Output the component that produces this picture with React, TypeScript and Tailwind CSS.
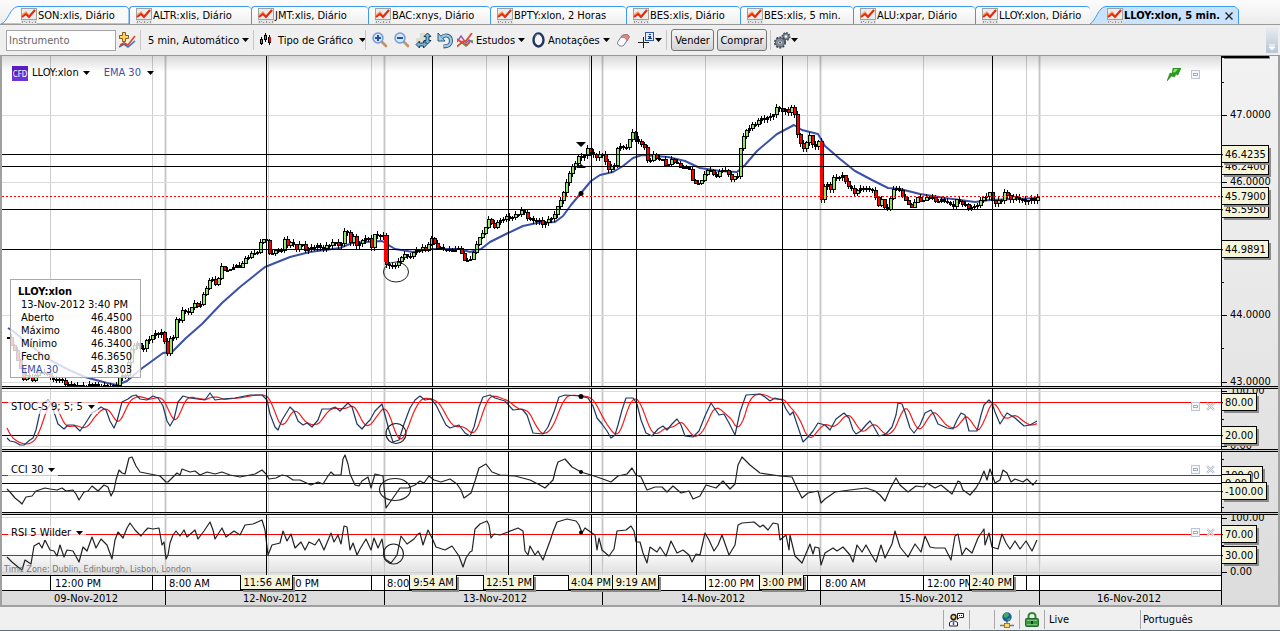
import type { ReactNode } from "react";
import clsx from "clsx";

type Point = [number, number];

const PLOT_LEFT = 2;
const AXIS_LEFT = 1221;

const TABS = [
  { label: "SON:xlis, Diário", width: "w-[129px] pl-[21px]" },
  { label: "ALTR:xlis, Diário", width: "w-[122px] pl-[6px]" },
  { label: "JMT:xlis, Diário", width: "w-[117px] pl-[6px]" },
  { label: "BAC:xnys, Diário", width: "w-[122px] pl-[6px]" },
  { label: "BPTY:xlon, 2 Horas", width: "w-[136px] pl-[6px]" },
  { label: "BES:xlis, Diário", width: "w-[114px] pl-[6px]" },
  { label: "BES:xlis, 5 min.", width: "w-[113px] pl-[6px]" },
  { label: "ALU:xpar, Diário", width: "w-[122px] pl-[6px]" },
  { label: "LLOY:xlon, Diário", width: "w-[115px] pl-[6px]" },
];

const PRICE =
  "8,337 13,350 19,363 23,380 27,373 31,383 35,373 40,372 50,375 57,382 60,377 63,383 75,386 93,385 107,387 115,385 118,378 125,375 128,363 132,343 137,345 142,350 147,338 153,335 160,332 163,333 166,353 168,352 170,340 173,337 175,318 179,320 181,307 187,315 193,302 199,307 204,293 210,277 215,283 218,280 221,267 227,270 233,267 240,266 245,258 257,251 260,242 264,237 267,242 269,255 273,250 282,250 284,241 287,245 290,240 297,250 300,243 305,248 313,247 327,246 333,243 343,243 344,231 348,232 350,243 353,235 357,247 362,240 368,238 372,247 374,235 383,236 385,262 392,267 400,260 403,251 408,259 413,252 422,247 425,252 430,237 435,243 438,249 460,250 464,260 472,257 478,238 483,232 487,219 493,227 500,219 510,217 522,211 528,218 543,223 550,218 555,215 558,202 563,192 567,178 572,168 578,155 582,158 587,150 590,152 594,152 597,160 600,150 604,160 608,167 615,165 617,148 627,145 632,132 636,142 643,142 645,153 648,165 652,155 660,158 667,167 672,157 680,168 690,167 693,186 700,182 707,168 715,177 723,167 730,179 737,175 740,147 745,132 753,123 765,118 772,115 777,107 782,110 787,108 790,115 792,102 795,122 798,138 802,149 810,135 813,147 819,140 821,198 825,184 830,187 833,177 843,177 848,185 855,193 862,187 872,190 877,205 882,197 885,213 888,207 894,185 897,187 900,193 909,207 917,198 922,203 927,195 937,202 943,198 952,207 957,198 967,208 973,207 978,202 985,197 990,192 993,202 1000,202 1004,192 1010,197 1020,199 1033,200 1037,197";

const EMA =
  "8,328 13,331 27,343 50,360 67,369 85,377 107,383 117,385 127,381 141,369 163,353 172,352 178,346 186,338 202,324 222,303 240,287 265,267 290,257 310,252 340,248 352,243 365,242 382,241 395,249 413,252 430,249 460,249 470,252 481,249 490,242 508,233 523,226 537,223 555,222 563,216 571,205 581,193 591,181 600,175 613,172 623,166 633,158 642,155 668,157 685,161 700,168 720,171 737,172 745,165 757,151 777,134 794,125 802,130 818,134 825,146 840,159 855,171 872,180 888,188 900,189 920,194 945,198 975,202 990,200 1037,198";

// starts before the visible range so the slow line has something to average
const STOCHASTIC =
  "-8,405 -2,418 3,432 7,438 10,441 15,442 20,445 24,445 30,440 33,438 36,430 40,412 44,403 48,400 51,403 54,412 58,424 64,429 68,425 74,425 80,431 85,424 92,413 97,410 101,407 106,410 110,421 114,428 117,421 122,402 128,399 132,396 136,395 140,399 147,400 153,396 158,398 163,406 167,421 170,426 174,419 178,402 183,396 190,398 197,399 205,400 210,393 215,400 222,399 235,398 250,395 262,395 267,400 270,414 275,427 278,430 282,420 290,407 294,411 298,421 303,425 307,423 312,427 318,420 322,409 330,409 335,407 340,411 348,403 352,407 357,424 362,429 367,423 370,420 375,411 382,404 385,415 389,430 393,442 399,440 404,424 410,408 415,400 420,396 425,400 431,399 436,405 441,415 446,425 450,428 459,425 465,433 470,436 474,427 479,407 483,397 490,395 495,398 505,401 513,410 522,409 527,415 533,433 543,434 548,427 554,412 559,397 565,395 580,396 588,398 593,406 597,418 602,424 607,431 611,438 615,435 618,425 622,410 626,398 633,398 637,404 641,420 646,433 652,436 658,429 663,426 667,430 672,424 677,419 681,425 685,436 693,437 699,431 705,416 711,403 719,415 724,414 729,423 735,435 740,412 746,395 760,394 765,397 770,401 775,398 782,400 786,409 790,415 793,412 798,427 803,442 808,437 813,431 818,423 825,425 830,430 836,419 844,413 849,418 853,430 856,434 861,431 866,425 870,421 874,427 879,436 886,434 892,427 896,415 898,403 902,404 905,412 910,428 914,433 920,425 925,413 931,410 934,415 938,424 947,428 953,429 957,420 961,413 965,415 969,431 977,431 981,415 984,405 989,400 992,403 995,412 1000,424 1007,413 1015,418 1024,426 1030,425 1037,421";

const CCI =
  "7,489 10,492 15,498 20,502 22,504 26,497 32,496 36,491 45,488 50,489 57,490 62,488 66,491 73,490 76,494 79,500 84,492 88,491 92,486 98,491 104,485 108,487 111,496 114,490 116,480 119,470 122,473 125,474 127,466 129,458 132,457 136,466 140,472 150,474 160,476 166,482 168,482 173,477 177,473 180,475 182,469 190,472 195,471 200,475 207,472 215,474 222,472 230,475 240,477 255,474 262,470 266,474 269,479 276,478 282,475 287,476 293,480 300,480 311,485 318,482 323,484 328,476 331,472 334,475 341,475 343,459 345,455 348,464 350,474 355,485 359,486 362,481 368,477 371,488 375,474 383,476 386,508 393,498 400,488 408,488 415,485 420,481 424,483 429,476 434,480 441,482 450,479 457,484 461,490 464,498 471,493 475,481 479,468 486,464 492,472 500,475 515,476 530,480 538,484 545,488 553,480 556,468 558,462 565,459 572,467 581,472 591,475 600,478 611,482 618,476 627,474 632,468 636,475 641,477 647,490 655,487 662,487 667,492 673,486 681,493 689,491 693,499 700,496 706,485 716,488 723,481 730,489 735,484 738,465 742,457 750,465 760,473 780,476 792,477 798,490 802,498 808,493 818,491 821,503 825,499 835,492 850,490 866,488 875,491 880,495 885,501 890,489 896,478 900,485 908,492 916,486 924,487 927,483 935,488 941,485 952,494 958,481 960,482 963,490 970,495 976,488 980,481 984,471 987,480 990,469 995,483 1000,480 1003,470 1007,473 1011,482 1015,479 1023,482 1027,479 1033,485 1037,480";

const RSI =
  "7,557 12,562 18,567 22,570 25,560 31,564 34,546 39,543 42,548 45,540 50,550 54,551 57,556 60,545 64,557 67,550 73,551 79,562 83,547 87,551 92,537 96,548 101,539 107,545 112,559 115,540 118,532 123,538 127,528 130,523 135,530 141,536 145,531 148,528 153,529 159,528 162,545 164,542 166,559 168,555 170,543 173,535 176,531 180,536 184,530 187,537 195,530 198,539 204,531 210,522 213,530 215,539 222,528 226,537 234,531 240,535 245,525 253,524 262,520 265,530 268,555 272,545 280,543 283,531 287,541 291,534 295,548 301,542 305,550 309,542 315,545 319,539 324,550 331,533 334,542 338,535 341,544 344,526 347,527 350,550 353,543 357,555 360,549 366,539 371,550 374,538 378,548 382,539 385,559 391,563 397,555 401,536 407,544 414,539 418,534 420,533 423,545 428,530 432,538 436,547 445,550 452,546 459,556 463,567 466,558 470,552 472,551 475,529 480,524 487,521 489,525 491,538 494,534 500,535 508,532 518,528 523,531 525,551 528,555 530,546 535,555 538,551 543,560 550,541 553,532 557,522 567,519 576,521 579,525 582,533 585,528 592,533 595,535 597,550 599,538 602,550 609,556 614,549 617,531 626,530 631,526 634,531 636,542 640,542 643,553 647,563 650,547 657,552 660,547 666,556 671,541 677,553 683,550 689,555 692,562 696,554 700,555 705,533 709,540 714,551 718,545 722,535 729,555 735,545 738,525 742,523 754,522 760,527 763,525 768,530 773,523 778,524 780,540 786,535 789,550 790,535 795,556 802,563 810,544 813,554 815,547 819,548 821,565 825,553 833,548 837,551 843,547 850,555 853,562 857,545 862,552 866,545 871,554 876,562 881,545 885,558 892,544 895,531 900,547 908,557 915,544 921,552 925,536 930,547 935,548 945,548 951,560 955,536 958,534 962,555 966,548 972,553 978,538 984,529 985,545 989,533 992,547 998,549 1002,534 1006,543 1010,549 1015,541 1020,549 1026,541 1032,551 1037,540";

const HOUR_LINES = [50, 152, 268, 371, 486, 589, 705, 807, 923, 1026];
const DAY_LINES = [165, 384, 602, 820, 1039];
const MARKS = [266, 432, 508, 591, 636, 782, 992];

const TIME_LABELS = [
  { x: 55, text: "12:00 PM" },
  { x: 169, text: "8:00 AM" },
  { x: 273, text: "12:00 PM" },
  { x: 387, text: "8:00 AM" },
  { x: 708, text: "12:00 PM" },
  { x: 825, text: "8:00 AM" },
  { x: 927, text: "12:00 PM" },
];

const TIME_TAGS = [
  { x: 241, w: 52, text: "11:56 AM" },
  { x: 410, w: 47, text: "9:54 AM" },
  { x: 484, w: 50, text: "12:51 PM" },
  { x: 569, w: 44, text: "4:04 PM" },
  { x: 613, w: 46, text: "9:19 AM" },
  { x: 760, w: 44, text: "3:00 PM" },
  { x: 970, w: 44, text: "2:40 PM" },
];

const DATES = [
  { x: 86, text: "09-Nov-2012" },
  { x: 275, text: "12-Nov-2012" },
  { x: 495, text: "13-Nov-2012" },
  { x: 713, text: "14-Nov-2012" },
  { x: 931, text: "15-Nov-2012" },
  { x: 1129, text: "16-Nov-2012" },
];

const QUOTE = [
  ["Aberto", "46.4500"],
  ["Máximo", "46.4800"],
  ["Mínimo", "46.3400"],
  ["Fecho", "46.3650"],
];

function parse(series: string): Point[] {
  return series.split(" ").map((p) => p.split(",").map(Number) as Point);
}

function valueAt(points: Point[], x: number): number {
  const i = points.findIndex((p) => p[0] >= x);
  if (i < 0) return points[points.length - 1][1];
  if (i === 0) return points[0][1];
  const [x0, y0] = points[i - 1];
  const [x1, y1] = points[i];
  return y0 + ((y1 - y0) * (x - x0)) / (x1 - x0);
}

function buildCandles() {
  const points = parse(PRICE);
  const candles = [];
  let open = points[0][1];
  for (let i = 0; i < 344; i++) {
    const x = 8 + i * 3;
    const noise = Math.sin(i * 2.3) * 1.2 + Math.sin(i * 5.1) * 0.9;
    const close = Math.round(valueAt(points, x) + noise);
    const top = Math.min(open, close);
    const bottom = Math.max(open, close);
    candles.push({
      x: x - 1,
      top,
      height: Math.max(bottom - top, 1) + 1,
      high: top - Math.round(Math.abs(Math.sin(i * 1.7)) * 3),
      low: bottom + 1 + Math.round(Math.abs(Math.sin(i * 3.1)) * 3),
      up: close < open,
    });
    open = close;
  }
  return candles;
}

function buildSlowLine() {
  const points = parse(STOCHASTIC);
  const out: string[] = [];
  for (let x = 7; x <= 1037; x += 2) {
    let sum = 0;
    for (let k = 0; k < 6; k++) sum += valueAt(points, x - k * 2);
    out.push(`${x},${(sum / 6).toFixed(1)}`);
  }
  return out.join(" ");
}

const CANDLES = buildCandles();
const FAST_LINE = parse(STOCHASTIC)
  .filter(([x]) => x >= 7)
  .map((p) => p.join(","))
  .join(" ");
const SLOW_LINE = buildSlowLine();

function Caret() {
  return (
    <svg width="7" height="4" viewBox="0 0 7 4" className="shrink-0">
      <path d="M0 0h7L3.5 4z" fill="#000" />
    </svg>
  );
}

function ChartIcon() {
  return (
    <svg width="16" height="16" viewBox="0 0 16 16" className="shrink-0">
      <rect x=".5" y=".5" width="15" height="11" fill="#e9edef" stroke="#a0a0a0" />
      <path d="M0 12h16v4H0z" fill="#e4e4e4" />
      <path d="M1.500 13v2M3.500 13v1M5.500 14v1M8.500 13v2M11.500 14v1M14.500 13v2" stroke="#999" />
      <path d="M1 7l4-3 3 4 6-6" fill="none" stroke="#ff9a5d" strokeWidth="1.5" />
      <path d="M1 9l4-3 3 3 6-7" fill="none" stroke="#e02a0c" strokeWidth="2" />
    </svg>
  );
}

function AddInstrumentIcon() {
  return (
    <svg width="17" height="17" viewBox="0 0 17 17">
      <path d="M0 15l5-3 4 3 7-6" fill="none" stroke="#3f6fae" strokeWidth="1.6" />
      <path d="M1 13l4-2 4 2 7-9" fill="none" stroke="#e0402a" strokeWidth="1.6" />
      <path d="M3.500.5h3v3h3v3h-3v3h-3v-3h-3v-3h3z" fill="#ffd45a" stroke="#8a5a12" />
    </svg>
  );
}

function CandlesIcon() {
  return (
    <svg width="12" height="14" viewBox="0 0 12 14" shapeRendering="crispEdges" className="shrink-0">
      <path d="M1 4h1v8H1zM5 0h1v9H5zM9 2h1v10H9z" fill="#000" />
      <path d="M0 6h3v5H0zM4 2h3v5H4zM8 4h3v6H8z" fill="#000" />
      <path d="M1 7h1v3H1zM5 3h1v3H5z" fill="#00d800" />
      <path d="M9 4h2v5H9z" fill="#f00" />
    </svg>
  );
}

function ZoomIcon({ plus }: { plus?: boolean }) {
  return (
    <svg width="16" height="16" viewBox="0 0 16 16">
      <path d="M10 10l4 4" stroke="#c9935f" strokeWidth="2.6" strokeLinecap="round" />
      <circle cx="6" cy="6" r="5" fill="#d5e8fa" stroke="#6f98d4" strokeWidth="1.4" />
      <path d={plus ? "M3 6h6M6 3v6" : "M3 6h6"} stroke="#2450a4" strokeWidth="2" />
    </svg>
  );
}

function FitIcon() {
  return (
    <svg width="17" height="17" viewBox="0 0 17 17">
      <path d="M5 1h5v9H1V6h4z" fill="#dcdccf" />
      <path
        d="M12.500 1l3.500 3.500h-2v4h2L12.500 12 9 8.500h2v-4H9zM1 12.500L4.500 9v2h4V9l3.500 3.500L8.500 16v-2h-4v2z"
        fill="#7db4d4"
        stroke="#163c5c"
      />
    </svg>
  );
}

function UndoIcon() {
  return (
    <svg width="17" height="17" viewBox="0 0 17 17">
      <path d="M4.500 5.500C8 2 14 3 14 9c0 3.500-3 5.500-7.500 5.500" fill="none" stroke="#245a80" strokeWidth="4" />
      <path d="M1 1v8h7z" fill="#a5cbe2" stroke="#245a80" />
      <path d="M4.500 5.500C8 2 14 3 14 9c0 3.500-3 5.500-7 5" fill="none" stroke="#9cc8e2" strokeWidth="2.2" />
    </svg>
  );
}

function StudiesIcon() {
  return (
    <svg width="16" height="15" viewBox="0 0 16 15" fill="none" strokeWidth="1.4" className="shrink-0">
      <path d="M0 13l5-3 4 3 4-5h3" stroke="#3aa048" />
      <path d="M0 9l4-6 5 7 3-3 4 3" stroke="#8a5ab4" />
      <path d="M0 6l4 3 5-1 6-8" stroke="#e8452c" strokeWidth="1.8" />
      <path d="M0 14l5-5 5 3 3-3" stroke="#e8452c" />
    </svg>
  );
}

function EllipseIcon() {
  return (
    <svg width="13" height="16" viewBox="0 0 13 16" className="shrink-0">
      <ellipse cx="6.500" cy="8" rx="5" ry="6.500" fill="#f4f6fa" stroke="#22355c" strokeWidth="2.4" />
      <path d="M3 4.500c1-2 3-2.500 4.500-2" stroke="#8ba4d0" fill="none" />
    </svg>
  );
}

function EraserIcon() {
  return (
    <svg width="13" height="13" viewBox="0 0 13 13">
      <path d="M5 1.500l4-1c2 0 3.500 1.500 3 3L7 11c-1 1.500-4 1.500-5.500 0S.5 8.500 1 7.500z" fill="#fafafa" stroke="#6f7d98" />
      <path d="M5 1.500l4-1c2 0 3.500 1.500 3 3L10 7C9 4 7 3 4 3.500z" fill="#dd8a84" stroke="#b05c58" strokeWidth=".6" />
    </svg>
  );
}

function CrosshairIcon() {
  return (
    <svg width="16" height="16" viewBox="0 0 16 16" shapeRendering="crispEdges" className="shrink-0">
      <path d="M0 10h11v1H0zM5 5h1v11H5z" fill="#222" />
      <rect x="7.500" y=".5" width="8" height="8" fill="#dcecff" stroke="#2c5a9c" />
      <path d="M11 2h2v1h-2zM10 4h3v2h1v1h-4V6h1V5h-1z" fill="#1c3f88" />
    </svg>
  );
}

function GearsIcon() {
  return (
    <svg width="17" height="17" viewBox="0 0 17 17" className="shrink-0">
      <circle cx="12" cy="4.500" r="3.500" fill="none" stroke="#4a525c" strokeWidth="2" strokeDasharray="1.6 1.1" />
      <circle cx="12" cy="4.500" r="3" fill="#8f99a4" stroke="#4a525c" />
      <circle cx="12" cy="4.500" r="1.200" fill="#eee" />
      <circle cx="6" cy="10.500" r="5" fill="none" stroke="#3d4650" strokeWidth="2" strokeDasharray="2 1.2" />
      <circle cx="6" cy="10.500" r="4.500" fill="#8b96a2" stroke="#4a5460" />
      <circle cx="6" cy="10.500" r="2.500" fill="#c8d0d8" stroke="#5a6470" strokeWidth=".8" />
      <circle cx="6" cy="10.500" r="1" fill="#3d4650" />
    </svg>
  );
}

function WindowIcon() {
  return (
    <svg width="9" height="9" viewBox="0 0 9 9" shapeRendering="crispEdges">
      <rect x=".5" y=".5" width="8" height="8" fill="#f4f6f9" stroke="#bcc5d2" />
      <rect x="2.500" y="3.500" width="4" height="2" fill="#fff" stroke="#a4b0c2" />
    </svg>
  );
}

function CloseIcon() {
  return (
    <svg width="9" height="9" viewBox="0 0 9 9">
      <path d="M1 1l7 7M8 1L1 8" stroke="#b4bcc6" strokeWidth="2.4" />
      <path d="M1 1l7 7M8 1L1 8" stroke="#eef1f4" />
    </svg>
  );
}

function Separator() {
  return <div className="h-5 w-px shrink-0 bg-[#c6c6c6]" />;
}

function TabBar() {
  return (
    <div role="tablist" className="flex h-6 items-end overflow-hidden bg-linear-to-b from-[#fcfcfc] to-[#ececec]">
      {TABS.map((tab, i) => (
        <button
          key={tab.label}
          role="tab"
          className={clsx(
            "relative flex h-[18px] shrink-0 items-end whitespace-nowrap",
            tab.width,
            i > 0 && "rounded-t-sm border-t border-l border-[#3d9bf0] bg-linear-to-b from-white to-[#efefef]",
          )}
        >
          {i === 0 && (
            <svg width="129" height="18" viewBox="0 0 129 18" className="absolute top-0 left-0">
              <path d="M1 18C8 16 10 1 18 .5H126L129 3V18z" fill="#f9f9f9" stroke="#3d9bf0" />
            </svg>
          )}
          <span className="relative flex items-center gap-px">
            <ChartIcon />
            {tab.label}
          </span>
        </button>
      ))}
      <button
        role="tab"
        aria-selected="true"
        className="relative flex h-[18px] w-[149px] shrink-0 items-end whitespace-nowrap pl-[17px] font-bold"
      >
        <svg width="149" height="18" viewBox="0 0 149 18" className="absolute top-0 left-0">
          <path d="M0 18C6 15 8 1 16 .5H145L148.500 4V18" fill="#c9e3ff" stroke="#3d9bf0" />
        </svg>
        <span className="relative flex items-center gap-px">
          <ChartIcon />
          LLOY:xlon, 5 min.
          <svg width="8" height="8" viewBox="0 0 8 8" className="ml-1">
            <path d="M.5.5l7 7M7.500.5l-7 7" stroke="#222" strokeWidth="1.4" />
          </svg>
        </span>
      </button>
    </div>
  );
}

function Toolbar() {
  return (
    <div className="flex h-8 items-center border-y border-[#999] bg-[#efefef] pl-[6px] whitespace-nowrap">
      <input
        aria-label="Instrumento"
        placeholder="Instrumento"
        className="h-[21px] w-[110px] shrink-0 border border-[#a5a5a5] bg-white px-[2px] pt-px outline-none placeholder:text-[#666]"
      />
      <button aria-label="Adicionar instrumento" className="ml-[3px] w-[21px] shrink-0">
        <AddInstrumentIcon />
      </button>
      <Separator />
      <button className="ml-[7px] flex w-[105px] shrink-0 items-center justify-between pr-1">
        <span className="pt-[2px] whitespace-pre">5 min, Automático</span>
        <Caret />
      </button>
      <Separator />
      <button className="ml-[6px] flex w-[105px] shrink-0 items-center gap-[6px] pr-[5px]">
        <CandlesIcon />
        <span className="flex-1 pt-[2px] text-left">Tipo de Gráfico</span>
        <Caret />
      </button>
      <Separator />
      <button aria-label="Ampliar" className="ml-[6px] w-[22px] shrink-0">
        <ZoomIcon plus />
      </button>
      <button aria-label="Reduzir" className="w-[21px] shrink-0">
        <ZoomIcon />
      </button>
      <button aria-label="Ajustar" className="w-[22px] shrink-0">
        <FitIcon />
      </button>
      <button aria-label="Anular" className="w-5 shrink-0">
        <UndoIcon />
      </button>
      <button className="flex w-[67px] shrink-0 items-center gap-[3px]">
        <StudiesIcon />
        <span className="flex-1 pt-[2px] text-left">Estudos</span>
        <Caret />
      </button>
      <button className="ml-2 flex w-[77px] shrink-0 items-center gap-[3px]">
        <EllipseIcon />
        <span className="flex-1 pt-[2px] text-left">Anotações</span>
        <Caret />
      </button>
      <button aria-label="Apagar" className="ml-2 w-[21px] shrink-0">
        <EraserIcon />
      </button>
      <button aria-label="Cursor" className="flex w-7 shrink-0 items-center gap-px">
        <CrosshairIcon />
        <Caret />
      </button>
      <Separator />
      <button className="ml-1 h-[22px] w-[43px] shrink-0 rounded-[3px] border border-[#777] bg-linear-to-b from-[#f6f6f6] to-[#d4d4d4] pt-[2px]">
        Vender
      </button>
      <button className="mx-[3px] h-[22px] w-[50px] shrink-0 rounded-[3px] border border-[#777] bg-linear-to-b from-[#f6f6f6] to-[#d4d4d4] pt-[2px]">
        Comprar
      </button>
      <Separator />
      <button aria-label="Definições" className="ml-[3px] flex shrink-0 items-center">
        <GearsIcon />
        <Caret />
      </button>
      <div className="mr-[2px] ml-auto flex h-[26px] w-3 items-end justify-center bg-linear-to-b from-[#e9edf2] to-[#b9c6d4] pb-[2px]">
        <svg width="8" height="7" viewBox="0 0 8 7">
          <path d="M1 1h6M1 3h6L4 6z" fill="#fff" stroke="#fff" />
        </svg>
      </div>
    </div>
  );
}

function Grid({ top, bottom }: { top: number; bottom: number }) {
  return (
    <g>
      {HOUR_LINES.map((x) => (
        <rect key={x} x={x} y={top} width="1" height={bottom - top} fill="#cdcdcd" />
      ))}
      {DAY_LINES.map((x) => (
        <g key={x}>
          <rect x={x - 1} y={top} width="3" height={bottom - top} fill="#e6e6e6" />
          <rect x={x} y={top} width="1" height={bottom - top} fill="#c8c8c8" />
        </g>
      ))}
    </g>
  );
}

function Marks({ top, bottom }: { top: number; bottom: number }) {
  return (
    <g>
      {MARKS.map((x) => (
        <rect key={x} x={x} y={top} width="1" height={bottom - top} fill="#000" />
      ))}
    </g>
  );
}

function Level({ y, color }: { y: number; color: string }) {
  return <rect x={PLOT_LEFT} y={y} width="100%" height="1" fill={color} />;
}

function PriceTag({ y, text, w = 48 }: { y: number; text: string; w?: number }) {
  return (
    <g>
      <rect x={AXIS_LEFT + 3} y={y - 6} width={w - 1} height="17" fill="#8a8a8a" />
      <rect x={AXIS_LEFT + 0.5} y={y - 8.5} width={w - 1} height="17" fill="#f5f5dc" stroke="#000" />
      <path d={`M${AXIS_LEFT} ${y - 2}l2 2.5l-2 2.500z`} fill="#000" />
      <text x={AXIS_LEFT + 4} y={y + 4}>
        {text}
      </text>
    </g>
  );
}

function Tick({ y, text }: { y: number; text?: string }) {
  return (
    <g>
      <rect x={AXIS_LEFT} y={y} width={text ? 6 : 3} height="1" />
      {text && (
        <text x={AXIS_LEFT + 9} y={y + 3}>
          {text}
        </text>
      )}
    </g>
  );
}

type PaneProps = {
  top: number;
  height: string;
  plot: ReactNode;
  axis: ReactNode;
  overlay?: ReactNode;
  shade?: string;
};

function Pane({ top, height, plot, axis, overlay, shade = "bg-white" }: PaneProps) {
  return (
    <div className={clsx("flex", height)}>
      <div className={clsx("relative min-w-0 flex-1", shade)}>
        <svg width="100%" height="100%" className="block overflow-hidden">
          <g transform={`translate(${-PLOT_LEFT} ${-top})`}>{plot}</g>
        </svg>
        {overlay}
      </div>
      <svg width="57" height="100%" className="block shrink-0 overflow-hidden border-l border-black">
        <g transform={`translate(${-AXIS_LEFT - 1} ${-top})`}>{axis}</g>
      </svg>
    </div>
  );
}

function Divider() {
  return <div className="h-[3px] border-y border-black bg-[#d0d0d0]" />;
}

function StudyOverlay({ name }: { name: string }) {
  return (
    <>
      <button className="absolute top-[11px] left-[6px] flex h-[14px] items-center gap-[5px] bg-white/70 px-[3px] whitespace-nowrap">
        {name}
        <Caret />
      </button>
      <div className="absolute top-[13px] right-[6px] flex gap-[6px]">
        <button aria-label="Maximizar">
          <WindowIcon />
        </button>
        <button aria-label="Fechar">
          <CloseIcon />
        </button>
      </div>
    </>
  );
}

function PricePlot() {
  return (
    <>
      <Grid top={56} bottom={386} />
      {[115, 182, 315, 382].map((y) => (
        <Level key={y} y={y} color="#dadada" />
      ))}
      <polyline points={EMA} fill="none" stroke="#3b50a8" strokeWidth="2" strokeLinejoin="round" />
      <g shapeRendering="crispEdges">
        {CANDLES.map((c) => (
          <g key={c.x}>
            <rect x={c.x + 1} y={c.high} width="1" height={c.low - c.high} fill="#000" />
            <rect x={c.x} y={c.top} width={c.height > 3 ? 4 : 3} height={c.height} fill="#000" />
            {c.height > 3 && (
              <rect x={c.x + 1} y={c.top + 1} width="2" height={c.height - 2} fill={c.up ? "#8fe86a" : "#f00"} />
            )}
          </g>
        ))}
        <rect x="820" y="141" width="2" height="58" fill="#f00" />
        <rect x="384" y="236" width="2" height="26" fill="#f00" />
      </g>
      <Marks top={56} bottom={386} />
      {[154, 166, 209, 249].map((y) => (
        <Level key={y} y={y} color="#000" />
      ))}
      <line x1="2" x2="110%" y1="196.5" y2="196.5" stroke="#f00" strokeDasharray="2 2" />
      <ellipse cx="396" cy="272" rx="12.500" ry="10" fill="none" stroke="#222" />
      <path d="M576 142h10l-5 5zM576 168h10l-5-4z" fill="#000" />
      <circle cx="581" cy="193.500" r="2.500" />
    </>
  );
}

function PriceAxis() {
  return (
    <>
      <rect x="1224" y="56" width="46" height="3" fill="#8a8a8a" />
      <rect x="1222" y="56" width="47" height="2" />
      {[82, 148, 215, 282, 348].map((y) => (
        <Tick key={y} y={y} />
      ))}
      <Tick y={115} text="47.0000" />
      <Tick y={182} text="46.0000" />
      <Tick y={315} text="44.0000" />
      <Tick y={382} text="43.0000" />
      <PriceTag y={166} text="46.2400" />
      <PriceTag y={154} text="46.4235" />
      <PriceTag y={209} text="45.5950" />
      <PriceTag y={196} text="45.7900" />
      <PriceTag y={249} text="44.9891" />
    </>
  );
}

function QuoteBox() {
  return (
    <div className="absolute top-[223px] left-2 w-[131px] border border-[#aaa] bg-white/80 pt-[5px] pr-2 pb-px pl-[7px] leading-[13px]">
      <div className="font-bold">LLOY:xlon</div>
      <div className="pl-[3px] whitespace-nowrap">13-Nov-2012 3:40 PM</div>
      <dl className="pl-[3px]">
        {QUOTE.map(([name, value]) => (
          <div key={name} className="flex justify-between">
            <dt>{name}</dt>
            <dd>{value}</dd>
          </div>
        ))}
        <div className="flex justify-between">
          <dt className="text-[#3b50a8]">EMA 30</dt>
          <dd>45.8303</dd>
        </div>
      </dl>
    </div>
  );
}

function PriceOverlay() {
  return (
    <>
      <div className="absolute inset-x-0 top-0 h-4 bg-linear-to-b from-black/15 to-transparent" />
      <div className="absolute top-[9px] left-[10px] flex h-4 items-center">
        <svg width="16" height="15" viewBox="0 0 16 15">
          <rect width="16" height="15" fill="#5a1cc0" />
          <path d="M0 15V9l16-4v10z" fill="#6d34d6" />
          <text x="8" y="11" textAnchor="middle" fontSize="8" fill="#fff">
            CFD
          </text>
        </svg>
        <button className="ml-1 flex items-center gap-1">
          LLOY:xlon
          <Caret />
        </button>
        <button className="ml-[14px] flex items-center gap-[6px] text-[#3b50a8]">
          EMA 30
          <Caret />
        </button>
      </div>
      <div className="absolute top-3 right-[21px] flex items-center gap-[10px]">
        <svg width="14" height="13" viewBox="0 0 14 13">
          <path d="M6 0h8l-3 7-2-1-1.500 3-3-1L0 13l3-8 2 .5z" fill="#2a9a20" stroke="#1c7a14" strokeWidth=".5" />
          <path d="M7 1h4L8 4.500 6 4z" fill="#8be06a" />
        </svg>
        <button aria-label="Maximizar">
          <WindowIcon />
        </button>
      </div>
      <QuoteBox />
    </>
  );
}

function TimeAxis() {
  return (
    <div className="flex">
      <svg width="100%" height="30" className="block min-w-0 flex-1 overflow-visible">
        <g transform={`translate(${-PLOT_LEFT} -575)`}>
          <rect x={PLOT_LEFT} y="576" width="100%" height="14" fill="#fff" />
          <Level y={575} color="#000" />
          <Level y={590} color="#000" />
          {HOUR_LINES.filter((x) => x !== 268).map((x) => (
            <rect key={x} x={x} y="575" width="1" height="15" />
          ))}
          {DAY_LINES.map((x) => (
            <rect key={x} x={x} y="575" width="1" height="30" />
          ))}
          {TIME_LABELS.map((t) => (
            <text key={t.x} x={t.x} y="587">
              {t.text}
            </text>
          ))}
          {DATES.map((d) => (
            <text key={d.x} x={d.x} y="602" textAnchor="middle">
              {d.text}
            </text>
          ))}
          {TIME_TAGS.map((t) => (
            <g key={t.x}>
              <rect x={t.x + 2} y="577" width={t.w} height="15" fill="#8a8a8a" />
              <rect x={t.x - 0.5} y="574.5" width={t.w} height="15" fill="#f5f5dc" stroke="#000" />
              <text x={t.x + t.w / 2} y="586" textAnchor="middle">
                {t.text}
              </text>
            </g>
          ))}
        </g>
      </svg>
      <div className="w-[57px] shrink-0 border-l border-black" />
    </div>
  );
}

function Chart() {
  return (
    <main className="border-x-2 border-b-2 border-[#a0a0a0] bg-linear-to-b from-[#f2f2f2] to-[#dcdcdc]">
      <Pane top={56} height="h-[330px]" plot={<PricePlot />} axis={<PriceAxis />} overlay={<PriceOverlay />} />
      <Divider />
      <Pane
        top={389}
        height="h-[60px]"
        plot={
          <>
            <Grid top={389} bottom={449} />
            <Level y={391} color="#dadada" />
            <Level y={446} color="#dadada" />
            <Level y={402} color="#f00" />
            <Level y={435} color="#000" />
            <g fill="none" strokeLinejoin="round" strokeWidth="1.2">
              <polyline points={SLOW_LINE} stroke="#f21c1c" />
              <polyline points={FAST_LINE} stroke="#1c3a62" />
              <circle cx="396" cy="433.500" r="10" stroke="#222" />
            </g>
            <Marks top={389} bottom={449} />
            <circle cx="581" cy="396.500" r="2.500" />
          </>
        }
        axis={
          <>
            <Tick y={391} text="100.00" />
            <Tick y={419} />
            <Tick y={446} text="0.00" />
            <PriceTag y={402} text="80.00" w={36} />
            <PriceTag y={435} text="20.00" w={36} />
          </>
        }
        overlay={<StudyOverlay name="STOC-S 9; 5; 5" />}
      />
      <Divider />
      <Pane
        top={452}
        height="h-[60px]"
        plot={
          <>
            <Grid top={452} bottom={512} />
            <Level y={475} color="#f00" />
            <Level y={483} color="#000" />
            <Level y={491} color="#008000" />
            <g fill="none" stroke="#222" strokeLinejoin="round" strokeWidth="1.2">
              <polyline points={CCI} />
              <ellipse cx="395" cy="489.500" rx="15.500" ry="11" />
            </g>
            <Marks top={452} bottom={512} />
            <circle cx="581" cy="472" r="2" />
          </>
        }
        axis={
          <>
            <Tick y={459} />
            <Tick y={507} />
            <PriceTag y={475} text="100.00" w={42} />
            <PriceTag y={483} text="0.00" w={30} />
            <PriceTag y={491} text="-100.00" w={46} />
          </>
        }
        overlay={<StudyOverlay name="CCI 30" />}
      />
      <Divider />
      <Pane
        top={515}
        height="h-[60px]"
        shade="bg-linear-to-b from-white from-60% to-[#dedede]"
        plot={
          <>
            <Grid top={515} bottom={575} />
            <Level y={517} color="#dadada" />
            <Level y={572} color="#cfcfcf" />
            <Level y={534} color="#f00" />
            <Level y={555} color="#008000" />
            <g fill="none" stroke="#222" strokeLinejoin="round" strokeWidth="1.2">
              <polyline points={RSI} />
              <circle cx="393.500" cy="554" r="10" />
            </g>
            <Marks top={515} bottom={575} />
            <circle cx="581" cy="532.500" r="2" />
          </>
        }
        axis={
          <>
            <Tick y={518} text="100.00" />
            <Tick y={545} />
            <Tick y={572} text="0.00" />
            <PriceTag y={534} text="70.00" w={36} />
            <PriceTag y={555} text="30.00" w={36} />
          </>
        }
        overlay={
          <>
            <StudyOverlay name="RSI 5 Wilder" />
            <span className="absolute bottom-0 left-[2px] text-[9px] leading-3 whitespace-nowrap text-[#777]">
              Time Zone: Dublin, Edinburgh, Lisbon, London
            </span>
          </>
        }
      />
      <TimeAxis />
    </main>
  );
}

function StatusBar() {
  const cell = "flex h-[19px] shrink-0 items-center justify-center border-l border-[#a8a8a8]";
  return (
    <footer className="mt-[2px] flex h-[22px] items-start justify-end border-b border-[#5f7078] bg-[#f0f0f0] pt-px">
      <div className={clsx(cell, "w-[26px]")}>
        <svg width="16" height="14" viewBox="0 0 16 14" fill="none" stroke="#222">
          <circle cx="4.500" cy="4" r="2.500" fill="#efd27a" strokeWidth="1.4" />
          <path d="M.5 13V9.500L3 8h3l2.500 1.500V13z" fill="#fff" />
          <path d="M4.500 9v3" stroke="#2850c0" strokeWidth="1.5" />
          <path d="M8.500.5h6v4h-4l-2 2z" fill="#fff" />
          <path d="M10 2.500h3" strokeDasharray="1 1" />
        </svg>
      </div>
      <div className={clsx(cell, "w-[25px]")} />
      <div className={clsx(cell, "w-[25px]")}>
        <svg width="14" height="16" viewBox="0 0 14 16">
          <path d="M7 9v4M0 13.500h14" stroke="#777" strokeWidth="1.5" />
          <circle cx="7" cy="5" r="4.700" fill="#1f5f9c" />
          <path d="M4 1.500l4-1 1 3-3 2.500-2-1zM7 7l3-1 .5 1.500L8 9z" fill="#3fae5c" />
          <rect x="4.500" y="11.500" width="5" height="4" fill="#ffd860" stroke="#a8782a" />
        </svg>
      </div>
      <div className={clsx(cell, "w-[25px]")}>
        <svg width="14" height="15" viewBox="0 0 14 15">
          <path d="M3.500 7V4a3.500 3 0 0 1 7 0v3" fill="none" stroke="#38843a" strokeWidth="2" />
          <rect x=".5" y="6.500" width="13" height="8" rx="1" fill="#3a9a40" stroke="#1f6a28" />
          <path d="M2 8.500h10M2 12.500h10" stroke="#7cc47c" />
          <path d="M6 9h2v3H6z" fill="#0c3c14" />
        </svg>
      </div>
      <div className={clsx(cell, "w-24")}>
        <span className="flex-1 pl-1">Live</span>
      </div>
      <div className={clsx(cell, "w-[140px]")}>
        <span className="flex-1 pl-[2px]">Português</span>
      </div>
    </footer>
  );
}

export default function App() {
  return (
    <div className="overflow-hidden bg-[#f0f0f0] font-['DejaVu_Sans_Condensed','Open_Sans',sans-serif] text-[11px] leading-4 text-black">
      <TabBar />
      <Toolbar />
      <Chart />
      <StatusBar />
    </div>
  );
}
